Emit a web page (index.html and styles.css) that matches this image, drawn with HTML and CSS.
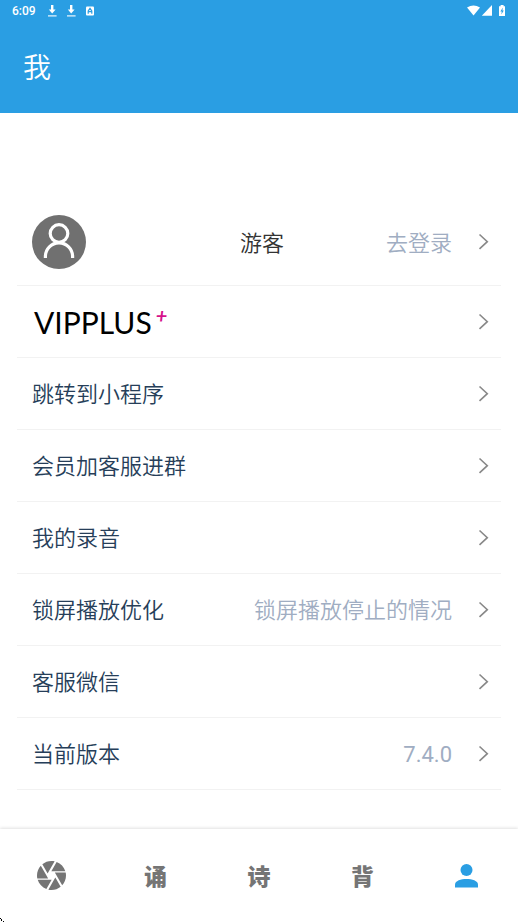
FILE: index.html
```html
<!DOCTYPE html>
<html lang="zh-CN">
<head>
<meta charset="utf-8">
<meta name="viewport" content="width=device-width, initial-scale=1">
<title>我</title>
<link rel="stylesheet" href="styles.css">
</head>
<body>
<svg class="defs" aria-hidden="true">
  <symbol id="chevron" viewBox="0 0 12 18"><path d="M1.500 1.500L9.300 8.700L1.500 15.900" fill="none" stroke="#888" stroke-width="1.600"/></symbol>
  <symbol id="download" viewBox="0 0 10 12"><path d="M4 0h2.400v4.600H8.600L5.200 8.400L1.800 4.600H4z" fill="#fff"/><path d="M1 10h8.600v1.700H1z" fill="#fff" opacity=".65"/></symbol>
</svg>
<header class="top">
  <div class="status">
    <span class="clock">6:09</span>
    <svg class="note" aria-hidden="true"><use href="#download"/></svg>
    <svg class="note" aria-hidden="true"><use href="#download"/></svg>
    <svg class="note" viewBox="0 0 10 12" aria-hidden="true"><rect x="1" y="1.500" width="8" height="9" rx="1" fill="#fff"/><path d="M3.200 8.800V6L5 3.300L6.800 6v2.800M3.400 6.700h3.200" fill="none" stroke="#2a9ee3" stroke-width="1.200"/></svg>
    <svg class="radio" viewBox="0 0 40 12" aria-hidden="true"><path d="M0 2.400Q6.500-1.600 13 2.400L6.500 10.600z" fill="#fff"/><path d="M25 0v10.800H14.800z" fill="#fff"/><path d="M33.600 0h3v1.200H38V11h-6V1.200h1.600z" fill="#fff"/><path d="M35.800 2.500L33.400 6.400h1.400l-.5 3.100L36.800 5.500h-1.400z" fill="#2a9ee3"/></svg>
  </div>
  <h1 class="title">我</h1>
</header>
<main class="list">
  <a class="row profile" href="#login">
    <svg class="avatar" viewBox="0 0 54 54" aria-hidden="true"><circle cx="27" cy="27" r="27" fill="#707070"/><g fill="none" stroke="#fff" stroke-width="3.200"><circle cx="27" cy="18.500" r="8.800"/><path d="M13.400 43V41.500a13.600 13.600 0 0 1 27.200 0V43"/></g></svg>
    <span class="name">游客</span>
    <span class="action"><span class="value">去登录</span><svg class="chevron" aria-hidden="true"><use href="#chevron"/></svg></span>
  </a>
  <a class="row" href="#vip"><span class="vip">VIPPLUS<sup class="plus">+</sup></span><svg class="chevron" aria-hidden="true"><use href="#chevron"/></svg></a>
  <a class="row" href="#mini"><span class="label">跳转到小程序</span><svg class="chevron" aria-hidden="true"><use href="#chevron"/></svg></a>
  <a class="row" href="#group"><span class="label">会员加客服进群</span><svg class="chevron" aria-hidden="true"><use href="#chevron"/></svg></a>
  <a class="row" href="#records"><span class="label">我的录音</span><svg class="chevron" aria-hidden="true"><use href="#chevron"/></svg></a>
  <a class="row" href="#lock"><span class="label">锁屏播放优化</span><span class="value">锁屏播放停止的情况</span><svg class="chevron" aria-hidden="true"><use href="#chevron"/></svg></a>
  <a class="row" href="#wechat"><span class="label">客服微信</span><svg class="chevron" aria-hidden="true"><use href="#chevron"/></svg></a>
  <a class="row" href="#version"><span class="label">当前版本</span><span class="value number">7.4.0</span><svg class="chevron" aria-hidden="true"><use href="#chevron"/></svg></a>
</main>
<nav class="tabs">
  <a class="tab" href="#discover" aria-label="发现"><svg class="tab-icon" viewBox="2 2 20 20" aria-hidden="true"><path fill="#757575" d="M9.400 10.500l4.770-8.260C13.470 2.090 12.750 2 12 2c-2.400 0-4.600.85-6.320 2.250l3.660 6.350.06-.1zM21.540 9c-.92-2.920-3.150-5.260-6-6.340L11.880 9h9.660zm.26 1h-7.490l.29.5 4.760 8.250C21 16.970 22 14.610 22 12c0-.69-.07-1.350-.2-2zM8.540 12l-3.900-6.750C3.010 7.030 2 9.390 2 12c0 .69.07 1.350.2 2h7.490l-1.150-2zm-6.080 3c.92 2.920 3.150 5.260 6 6.340L12.120 15H2.460zm11.270 0l-3.900 6.760c.7.15 1.420.24 2.170.24 2.400 0 4.600-.85 6.320-2.250l-3.660-6.350-.93 1.600z"/></svg></a>
  <a class="tab" href="#recite"><span class="tab-text">诵</span></a>
  <a class="tab" href="#poem"><span class="tab-text">诗</span></a>
  <a class="tab" href="#memorize"><span class="tab-text">背</span></a>
  <a class="tab" href="#me" aria-label="我" aria-current="page"><svg class="tab-icon" viewBox="0 0 29 29" aria-hidden="true"><circle cx="14.500" cy="9" r="6" fill="#2a9ee3"/><path d="M3 26.500v-3c0-3.700 6-5.500 11.500-5.500S26 19.800 26 23.500v3z" fill="#2a9ee3"/></svg></a>
</nav>
<svg class="pointer" viewBox="0 0 4 4" aria-hidden="true"><path d="M0 0h1v1H0zM1 1h1v1H1zM3 3h1v1H3zM1 2h1v1H1z"/></svg>
</body>
</html>
```
FILE: styles.css
```css
* {
  box-sizing: border-box;
}

body {
  margin: 0;
  min-height: 100vh;
  display: flex;
  flex-direction: column;
  background: #fff;
  color: #263e59;
  font-family: Roboto, "Noto Sans CJK SC", sans-serif;
  font-size: 22px;
  font-weight: 350;
  line-height: 32px;
}

a {
  color: inherit;
  text-decoration: none;
}

.defs {
  position: absolute;
  width: 0;
  height: 0;
}

.top {
  height: 113px;
  background: #2a9ee3;
  color: #fff;
}

.status {
  display: flex;
  align-items: center;
  gap: 9px;
  height: 21px;
  padding: 0 11px 0 12px;
}

.clock {
  margin-right: 2px;
  font-size: 12px;
  font-weight: 500;
  line-height: 20px;
}

.note {
  width: 10px;
  height: 12px;
}

.radio {
  width: 40px;
  height: 12px;
  margin-left: auto;
}

.title {
  margin: 0;
  padding: 28px 23px 0;
  font-size: 28px;
  font-weight: 350;
  line-height: 40px;
}

.list {
  flex: 1;
  padding: 86px 17px 0;
}

.row {
  display: flex;
  align-items: center;
  height: 72px;
  padding: 0 11px 0 15px;
  border-bottom: 1px solid #f2f2f2;
}

.profile {
  display: grid;
  grid-template-columns: 1fr auto 1fr;
  height: 87px;
}

.avatar {
  width: 54px;
  height: 54px;
}

.action {
  display: flex;
  align-items: center;
}

.label,
.name,
.value {
  padding-top: 3px;
}

.name {
  padding-left: 2px;
  color: #333;
}

.value {
  margin-left: auto;
  color: #a0adc2;
}

.number {
  font-weight: 400;
}

.chevron {
  width: 12px;
  height: 18px;
  margin-left: auto;
}

.value + .chevron {
  margin-left: 26px;
}

.vip {
  padding-left: 2px;
  color: #000;
  font-family: Lato, sans-serif;
  font-size: 30px;
  font-weight: 400;
}

.plus {
  padding-left: 4px;
  color: #d6128b;
  font-size: 20px;
  font-style: italic;
  font-weight: 700;
  line-height: 0;
}

.tabs {
  display: grid;
  grid-template-columns: repeat(5, 1fr);
  height: 93px;
  box-shadow: 0 -1px 3px rgba(0, 0, 0, 0.12);
}

.tab {
  display: flex;
  align-items: center;
  justify-content: center;
  color: #757575;
  font-size: 23px;
  font-weight: 900;
}

.tab-text {
  padding-top: 4px;
}

.tab-icon {
  width: 29px;
  height: 29px;
}

.pointer {
  position: absolute;
  bottom: 0;
  left: 0;
  width: 4px;
  height: 4px;
}
```
